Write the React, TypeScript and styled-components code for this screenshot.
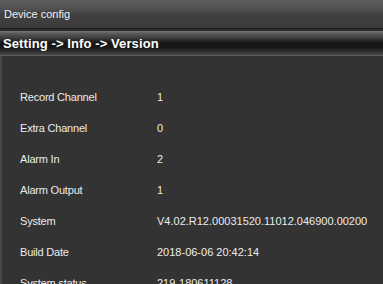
import styled, { createGlobalStyle } from 'styled-components';

const GlobalStyle = createGlobalStyle`
  html, body {
    margin: 0;
    padding: 0;
    background: #333333;
  }
`;

const Window = styled.div`
  width: 383px;
  height: 284px;
  overflow: hidden;
  display: flex;
  flex-direction: column;
  background: #333333;
  font-family: "Liberation Sans", Arial, sans-serif;
`;

const TitleBar = styled.div`
  height: 29px;
  flex: none;
  display: flex;
  align-items: center;
  padding-left: 4px;
  padding-bottom: 1px;
  box-sizing: border-box;
  background: linear-gradient(#5e5e5e 0%, #4e4e4e 35%, #404040 50%, #3c3c3c 100%);
  color: #f0f0f0;
  font-size: 11px;
  border-bottom: 1px solid #1c1c1c;
`;

const Gap = styled.div`
  height: 2px;
  flex: none;
  background: #2b2b2b;
`;

const SectionHeader = styled.div`
  height: 25px;
  flex: none;
  display: flex;
  align-items: center;
  padding-left: 3px;
  padding-top: 1px;
  box-sizing: border-box;
  background: linear-gradient(#7a7a7a 0%, #5a5a5a 10%, #3a3a3a 30%, #161616 50%, #161616 65%, #2e2e2e 85%, #4a4a4a 100%);
  border-bottom: 1px solid #5e5e5e;
  color: #ffffff;
  font-size: 13px;
  font-weight: bold;
  letter-spacing: 0.1px;
`;

const Body = styled.div`
  flex: 1;
  border-left: 2px solid #4a4a4a;
  padding: 25px 0 0 18px;
  display: flex;
  flex-direction: column;
`;

const Row = styled.div`
  height: 31px;
  flex: none;
  display: flex;
  align-items: center;
  color: #ececec;
  font-size: 11px;
  letter-spacing: -0.2px;
`;

const Label = styled.span`
  width: 137px;
  flex: none;
`;

const Value = styled.span`
  white-space: nowrap;
  letter-spacing: 0;
`;

const rows: [string, string][] = [
  ['Record Channel', '1'],
  ['Extra Channel', '0'],
  ['Alarm In', '2'],
  ['Alarm Output', '1'],
  ['System', 'V4.02.R12.00031520.11012.046900.00200'],
  ['Build Date', '2018-06-06 20:42:14'],
  ['System status', '219-180611128'],
];

export default function App() {
  return (
    <Window>
      <GlobalStyle />
      <TitleBar>Device config</TitleBar>
      <Gap />
      <SectionHeader>Setting -&gt; Info -&gt; Version</SectionHeader>
      <Body>
        {rows.map(([label, value]) => (
          <Row key={label}>
            <Label>{label}</Label>
            <Value>{value}</Value>
          </Row>
        ))}
      </Body>
    </Window>
  );
}
